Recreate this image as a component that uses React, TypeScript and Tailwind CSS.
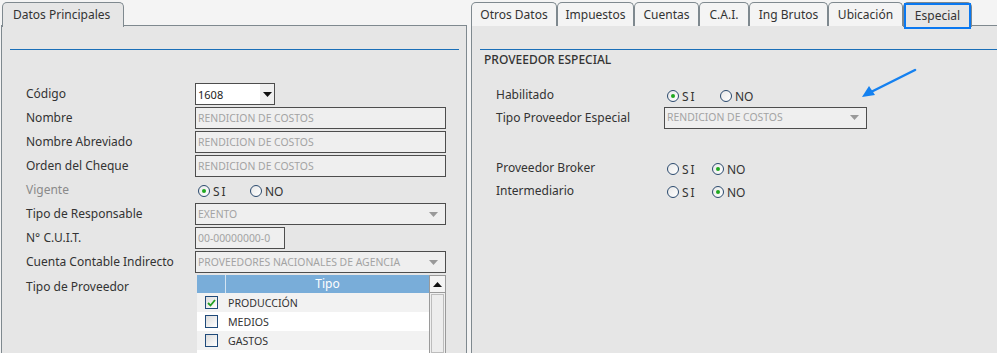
import React from "react";

const FONT = "font-['Noto_Sans',sans-serif]";

function Radio({ checked, label }: { checked?: boolean; label: string }) {
  return (
    <span className="flex items-center">
      <span className="w-[12px] h-[12px] rounded-full border border-[#2b4a6e] bg-gradient-to-br from-[#e8e8e8] to-[#ffffff] flex items-center justify-center">
        {checked && <span className="w-[4px] h-[4px] rounded-full bg-[#1fa81f]" />}
      </span>
      <span className={`ml-[3px] text-[12px] text-[#333] ${label === "SI" ? "tracking-[2px]" : "tracking-[0px]"} leading-none pt-[2px]`}>{label}</span>
    </span>
  );
}

function Arrow({ color = "#999" }: { color?: string }) {
  return (
    <svg width="9" height="5" viewBox="0 0 9 5">
      <polygon points="0,0 9,0 4.5,5" fill={color} />
    </svg>
  );
}

function TextBox({ w, value }: { w: string; value: string }) {
  return (
    <div className={`${w} h-[22px] border border-[#4d4d4d] bg-[#efefef] flex items-center px-[2px] text-[10.4px] text-[#a3a3a3] leading-none`}>
      {value}
    </div>
  );
}

function SelectBox({ w, value }: { w: string; value: string }) {
  return (
    <div className={`${w} h-[22px] border border-[#4d4d4d] bg-[#efefef] flex items-center justify-between pl-[2px] pr-[7px] text-[10.4px] text-[#a3a3a3] leading-none`}>
      <span>{value}</span>
      <Arrow />
    </div>
  );
}

function Row({ label, children, muted, labelW }: { label: string; children?: React.ReactNode; muted?: boolean; labelW: string }) {
  return (
    <div className="flex items-center h-[24px]">
      <div className={`${labelW} text-[12px] ${muted ? "text-[#8a8a8a]" : "text-[#333]"} -mt-[1px]`}>{label}</div>
      {children}
    </div>
  );
}

function Check({ checked }: { checked?: boolean }) {
  return (
    <span className="w-[13px] h-[13px] border border-[#1f4a7a] bg-gradient-to-br from-[#dcdcdc] to-[#ffffff] flex items-center justify-center">
      {checked && (
        <svg width="9" height="8" viewBox="0 0 9 8">
          <path d="M1 4 L3.5 6.5 L8 1" stroke="#22a022" strokeWidth="1.8" fill="none" />
        </svg>
      )}
    </span>
  );
}

export default function App() {
  const rightTabs = [
    { t: "Otros Datos", w: "w-[86px]" },
    { t: "Impuestos", w: "w-[77px]" },
    { t: "Cuentas", w: "w-[65px]" },
    { t: "C.A.I.", w: "w-[50px]" },
    { t: "Ing Brutos", w: "w-[79px]" },
    { t: "Ubicación", w: "w-[75px]" },
  ];
  return (
    <div className={`${FONT} relative w-[997px] h-[353px] bg-[#f4f4f4] overflow-hidden flex gap-[4px] pt-[2px] pl-[1px]`}>
      {/* Left panel */}
      <div className="w-[466px] flex flex-col">
        <div className="flex h-[24px] relative z-10 -mb-px">
          <div className="ml-[1px] w-[122px] h-[25px] border border-b-0 border-[#7f898f] rounded-t-[5px] bg-[#e6e6e6] flex items-center pl-[10px] text-[12px] text-[#333]">
            Datos Principales
          </div>
        </div>
        <div className="flex-1 border border-[#7f898f] bg-[#e6e6e6] pt-[23px]">
          <div className="h-px bg-[#1a6fb8] ml-[8px] mr-[7px]" />
          <div className="mt-[32px] pl-[24px] flex flex-col">
            <Row label="Código" labelW="w-[169px]">
              <div className="w-[80px] h-[22px] border border-[#4d4d4d] bg-white flex items-center justify-between text-[11px] text-[#222] leading-none">
                <span className="pl-[2px]">1608</span>
                <span className="w-[14px] h-[20px] bg-[#f0f0f0] flex items-center justify-center">
                  <Arrow color="#111" />
                </span>
              </div>
            </Row>
            <Row label="Nombre" labelW="w-[169px]">
              <TextBox w="w-[251px]" value="RENDICION DE COSTOS" />
            </Row>
            <Row label="Nombre Abreviado" labelW="w-[169px]">
              <TextBox w="w-[251px]" value="RENDICION DE COSTOS" />
            </Row>
            <Row label="Orden del Cheque" labelW="w-[169px]">
              <TextBox w="w-[251px]" value="RENDICION DE COSTOS" />
            </Row>
            <Row label="Vigente" labelW="w-[169px]" muted>
              <div className="flex ml-[3px] mt-[2px]">
                <span className="w-[52px]"><Radio checked label="SI" /></span>
                <Radio label="NO" />
              </div>
            </Row>
            <Row label="Tipo de Responsable" labelW="w-[169px]">
              <SelectBox w="w-[251px]" value="EXENTO" />
            </Row>
            <Row label="N° C.U.I.T." labelW="w-[169px]">
              <TextBox w="w-[90px]" value="00-00000000-0" />
            </Row>
            <Row label="Cuenta Contable Indirecto" labelW="w-[169px]">
              <SelectBox w="w-[251px]" value="PROVEEDORES NACIONALES DE AGENCIA" />
            </Row>
            <div className="flex mt-[1px]">
              <div className="w-[169px] text-[12px] text-[#333] pt-[3px]">Tipo de Proveedor</div>
              <div className="flex ml-[2px]">
                <div className="w-[232px] flex flex-col">
                  <div className="flex h-[18px] bg-[#79add9] text-white text-[12px] leading-none">
                    <div className="w-[29px] border-r border-[#d4e4f2]" />
                    <div className="flex-1 flex items-center justify-center">Tipo</div>
                  </div>
                  {[
                    { t: "PRODUCCIÓN", c: true, bg: "bg-[#f2f2f2]" },
                    { t: "MEDIOS", c: false, bg: "bg-white" },
                    { t: "GASTOS", c: false, bg: "bg-[#f2f2f2]" },
                    { t: "", c: false, bg: "bg-white", empty: true },
                  ].map((r, i) => (
                    <div key={i} className={`flex items-center h-[19px] ${r.bg} text-[10.6px] text-[#333] leading-none`}>
                      <div className="w-[29px] flex justify-center">{!r.empty && <Check checked={r.c} />}</div>
                      <div className="pl-[2px] pt-[2px]">{r.t}</div>
                    </div>
                  ))}
                </div>
                <div className="w-[17px] h-[80px] border border-[#9a9a9a] bg-[#f0f0f0] flex flex-col">
                  <div className="h-[17px] border-b border-[#9a9a9a] bg-[#f4f4f4] flex items-center justify-center">
                    <svg width="9" height="5" viewBox="0 0 9 5"><polygon points="4.5,0 9,5 0,5" fill="#111" /></svg>
                  </div>
                  <div className="flex-1 m-[1px] border border-[#bdbdbd] bg-[#ededed]" />
                </div>
              </div>
            </div>
          </div>
        </div>
      </div>

      {/* Right panel */}
      <div className="flex-1 flex flex-col">
        <div className="flex h-[24px] relative z-10 -mb-px">
          {rightTabs.map((t) => (
            <div key={t.t} className={`${t.w} h-[24px] border border-b-0 border-[#7f898f] rounded-t-[5px] bg-[#f4f4f4] flex items-center justify-center text-[12px] text-[#333]`}>
              {t.t}
            </div>
          ))}
          <div className="w-[69px] h-[25px] border border-b-0 border-[#7f898f] rounded-t-[5px] bg-[#e6e6e6] flex items-center justify-center">
            <div className="w-[69px] h-[26px] mt-[1px] border-[2px] border-[#0a78f0] flex items-center justify-center text-[12px] text-[#333]">
              Especial
            </div>
          </div>
        </div>
        <div className="flex-1 border-l border-t border-[#7f898f] bg-[#e6e6e6] pt-[23px]">
          <div className="h-px bg-[#1a6fb8] ml-[8px]" />
          <div className="h-[20px] pl-[12px] flex items-center text-[12px] font-medium text-[#333]">PROVEEDOR ESPECIAL</div>
          <div className="mt-[13px] pl-[24px] flex flex-col">
            <div className="flex items-center h-[23px]">
              <div className="w-[168px] text-[12px] text-[#333]">Habilitado</div>
              <div className="flex ml-[3px] mt-[2px]">
                <span className="w-[53px]"><Radio checked label="SI" /></span>
                <Radio label="NO" />
              </div>
            </div>
            <div className="flex items-center h-[23px]">
              <div className="w-[168px] text-[12px] text-[#333]">Tipo Proveedor Especial</div>
              <SelectBox w="w-[203px]" value="RENDICION DE COSTOS" />
            </div>
            <div className="h-[27px]" />
            <div className="flex items-center h-[23px]">
              <div className="w-[168px] text-[12px] text-[#333]">Proveedor Broker</div>
              <div className="flex ml-[3px] mt-[2px]">
                <span className="w-[45px]"><Radio label="SI" /></span>
                <Radio checked label="NO" />
              </div>
            </div>
            <div className="flex items-center h-[23px]">
              <div className="w-[168px] text-[12px] text-[#333]">Intermediario</div>
              <div className="flex ml-[3px] mt-[2px]">
                <span className="w-[45px]"><Radio label="SI" /></span>
                <Radio checked label="NO" />
              </div>
            </div>
          </div>
        </div>
      </div>

      {/* annotation arrow */}
      <svg className="absolute left-[855px] top-[62px]" width="70" height="42" viewBox="0 0 70 42">
        <line x1="60" y1="8" x2="16" y2="30" stroke="#1481f0" strokeWidth="2.5" strokeLinecap="round" />
        <polygon points="7,35 14,24 20,33" fill="#1481f0" />
      </svg>
    </div>
  );
}
